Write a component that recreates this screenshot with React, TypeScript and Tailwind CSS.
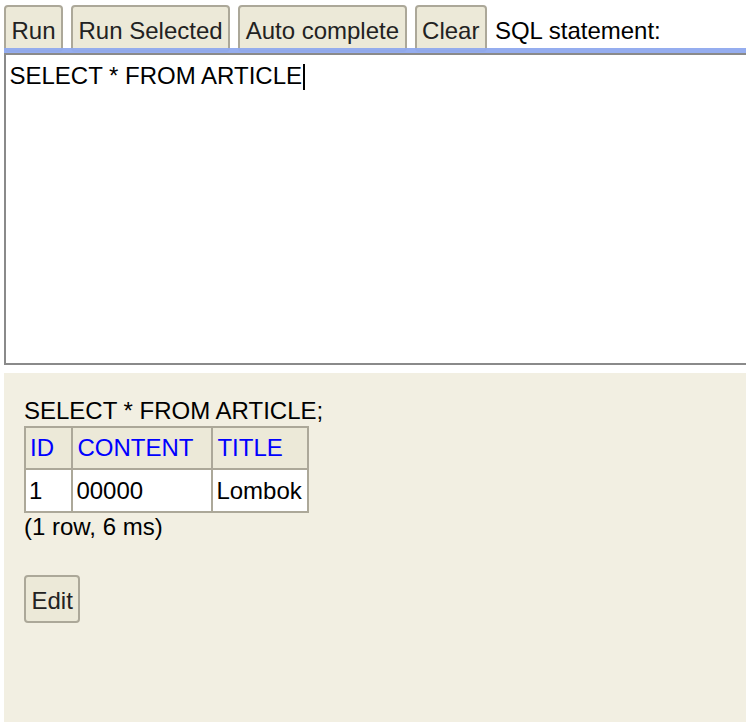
import React from "react";

const btn =
  "shrink-0 rounded-[4px] border-2 border-[#aca899] bg-[#ece9d8] px-[5.5px] pt-[9.5px] pb-[6.3px] leading-[27.5px] text-[#222]";

const th =
  "border-2 border-[#aca899] py-[6.5px] pl-[4px] pr-0 text-left font-normal text-[#0000ff] whitespace-nowrap overflow-hidden";
const td = "border-2 border-[#aca899] py-[6.5px] pl-[3px] pr-0 whitespace-nowrap overflow-hidden";

export default function App() {
  return (
    <div className="flex h-[722px] w-[746px] flex-col overflow-hidden bg-white font-['Liberation_Sans',Arial,sans-serif] text-[24px] leading-[27.5px] text-black">
      <div className="flex items-start gap-[8px] pl-[4px] pt-[5px]">
        <button className={btn}>Run</button>
        <button className={btn}>Run Selected</button>
        <button className={btn}>Auto complete</button>
        <button className={btn}>Clear</button>
        <span className="whitespace-nowrap pt-[12px]">SQL statement:</span>
      </div>
      <div className="relative z-10 ml-[4px] mt-[-4.3px] h-[5px] bg-[#8fa9ee] opacity-95" />
      <div className="ml-[4px] h-[312px] shrink-0 border-2 border-r-0 border-[#8a8a8a] bg-white pl-[3.5px] pt-[7px]">
        <span className="whitespace-nowrap">SELECT * FROM ARTICLE</span>
        <span className="ml-[1px] inline-block h-[26px] w-[2px] bg-black align-[-6px]" />
      </div>
      <div className="ml-[4px] mt-[8px] flex-1 bg-[#f2efe2] pl-[20px] pt-[23.8px]">
        <div className="whitespace-nowrap">SELECT * FROM ARTICLE;</div>
        <table className="mt-[1.6px] w-[285px] table-fixed border-collapse border-2 border-[#aca899]">
          <colgroup>
            <col className="w-[47.4px]" />
            <col className="w-[140px]" />
            <col className="w-[95.6px]" />
          </colgroup>
          <thead>
            <tr className="bg-[#ece9d8]">
              <th className={th}>ID</th>
              <th className={th}>CONTENT</th>
              <th className={th}>TITLE</th>
            </tr>
          </thead>
          <tbody>
            <tr className="bg-white">
              <td className={td}>1</td>
              <td className={td}>00000</td>
              <td className={td}>Lombok</td>
            </tr>
          </tbody>
        </table>
        <div className="whitespace-nowrap">(1 row, 6 ms)</div>
        <button className={btn + " mt-[35px]"}>Edit</button>
      </div>
    </div>
  );
}
